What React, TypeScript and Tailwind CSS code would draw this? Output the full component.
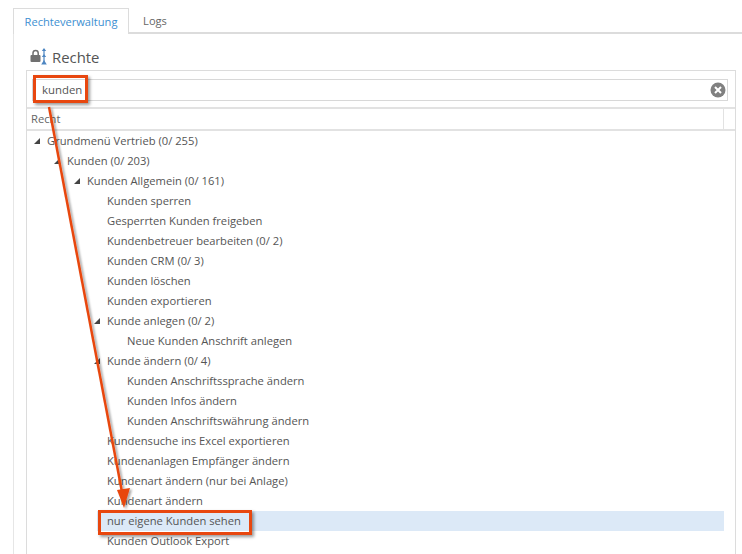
const font = { fontFamily: '"Open Sans", "Noto Sans", sans-serif' };

type Row = { label: string; level: number; arrow?: boolean; selected?: boolean };

const rows: Row[] = [
  { label: "Grundmenü Vertrieb (0/ 255)", level: 0, arrow: true },
  { label: "Kunden (0/ 203)", level: 1, arrow: true },
  { label: "Kunden Allgemein (0/ 161)", level: 2, arrow: true },
  { label: "Kunden sperren", level: 3 },
  { label: "Gesperrten Kunden freigeben", level: 3 },
  { label: "Kundenbetreuer bearbeiten (0/ 2)", level: 3 },
  { label: "Kunden CRM (0/ 3)", level: 3 },
  { label: "Kunden löschen", level: 3 },
  { label: "Kunden exportieren", level: 3 },
  { label: "Kunde anlegen (0/ 2)", level: 3, arrow: true },
  { label: "Neue Kunden Anschrift anlegen", level: 4 },
  { label: "Kunde ändern (0/ 4)", level: 3, arrow: true },
  { label: "Kunden Anschriftssprache ändern", level: 4 },
  { label: "Kunden Infos ändern", level: 4 },
  { label: "Kunden Anschriftswährung ändern", level: 4 },
  { label: "Kundensuche ins Excel exportieren", level: 3 },
  { label: "Kundenanlagen Empfänger ändern", level: 3 },
  { label: "Kundenart ändern (nur bei Anlage)", level: 3 },
  { label: "Kundenart ändern", level: 3 },
  { label: "nur eigene Kunden sehen", level: 3, selected: true },
  { label: "Kunden Outlook Export", level: 3 },
];

const indent = ["pl-[20px]", "pl-[40px]", "pl-[60px]", "pl-[80px]", "pl-[100px]"];
const arrowPos = ["left-[6px]", "left-[26px]", "left-[46px]", "left-[66px]"];

function TreeRow({ row }: { row: Row }) {
  return (
    <div className={`relative h-5 flex items-center ${indent[row.level]}`}>
      {row.selected && <div className="absolute left-[70px] right-0 top-0 bottom-0 bg-[#dce9f7]" />}
      {row.arrow && (
        <svg
          className={`absolute top-[6px] ${arrowPos[row.level]}`}
          width="8"
          height="8"
          viewBox="0 0 8 8"
        >
          <path d="M7 1V7H1Z" fill="#444444" />
        </svg>
      )}
      <span className="relative text-[11.2px] leading-5 text-[#555555] whitespace-nowrap">{row.label}</span>
    </div>
  );
}

export default function App() {
  return (
    <div className="relative w-[742px] h-[554px] overflow-hidden bg-white" style={font}>
      <div className="h-[8px]" />
      <div className="ml-[13px] flex h-[26px] border-b-2 border-[#dcdcdc]">
        <div className="w-[116px] h-[26px] pt-[2px] bg-white border border-b-0 border-[#dcdcdc] flex items-center justify-center text-[11.1px] text-[#3d8fd1]">
          Rechteverwaltung
        </div>
        <div className="w-[52px] pt-[3px] flex items-center justify-center text-[11.1px] text-[#666666]">Logs</div>
      </div>
      <div className="ml-[13px] border-l border-[#e6e6e6] pl-[12px] h-[520px]">
        <div className="h-[36px] pt-[10px] flex items-center pl-[4px]">
          <svg className="mr-[5px]" width="17" height="18" viewBox="0 0 17 18">
            <path d="M3 7V5a2.6 2.6 0 0 1 5.2 0V7" fill="none" stroke="#707070" strokeWidth="1.5" />
            <rect x="0.5" y="7" width="10" height="7" rx="1" fill="#707070" />
            <path d="M14 0l2.2 3h-4.4zM14 6l2.2 3h-4.4zM14 12l2.8 4.5h-5.6z" fill="#4f87c2" />
            <rect x="13.4" y="1" width="1.2" height="15" fill="#4f87c2" />
          </svg>
          <span className="text-[14.9px] leading-5 text-[#555555]">Rechte</span>
        </div>
        <div className="w-[710px] h-[490px] border border-b-0 border-[#dcdcdc]">
          <div className="h-[38px] pt-[8px] pl-[5px] pr-[7px] border-b-2 border-[#e2e2e2]">
            <div className="h-[22px] border border-[#d8d8d8] flex items-center justify-between pl-[9px] pr-[1px]">
              <span className="text-[11.4px] text-[#555555]">kunden</span>
              <svg width="16" height="16" viewBox="0 0 16 16">
                <circle cx="8" cy="8" r="7.5" fill="#808080" />
                <path d="M5 5l6 6M11 5l-6 6" stroke="#ffffff" strokeWidth="2" />
              </svg>
            </div>
          </div>
          <div className="h-[22px] flex border-b-2 border-[#e2e2e2]">
            <div className="w-[697px] border-r border-[#e2e2e2] pl-[4px] text-[11.2px] leading-[20px] text-[#666666]">
              Recht
            </div>
          </div>
          <div className="w-[697px]">
            {rows.map((r) => (
              <TreeRow key={r.label} row={r} />
            ))}
          </div>
        </div>
      </div>

      <svg className="absolute left-0 top-0 pointer-events-none" width="742" height="554" viewBox="0 0 742 554">
        <defs>
          <filter id="s" x="-20%" y="-20%" width="140%" height="140%">
            <feDropShadow dx="2" dy="1.5" stdDeviation="1.2" floodColor="#000000" floodOpacity="0.35" />
          </filter>
        </defs>
        <g filter="url(#s)">
          <path d="M49 107L122 492" stroke="#e8470f" strokeWidth="2.5" fill="none" />
          <path d="M124 508L117 490L130 488Z" fill="#e8470f" />
        </g>
      </svg>
      <div className="absolute left-[33px] top-[75px] w-[55px] h-[28px] border-[3px] border-[#e8470f] shadow-[2px_2px_3px_rgba(0,0,0,0.4)]" />
      <div className="absolute left-[98px] top-[510px] w-[154px] h-[25px] border-[3px] border-[#e8470f] shadow-[2px_2px_3px_rgba(0,0,0,0.4)]" />
    </div>
  );
}
